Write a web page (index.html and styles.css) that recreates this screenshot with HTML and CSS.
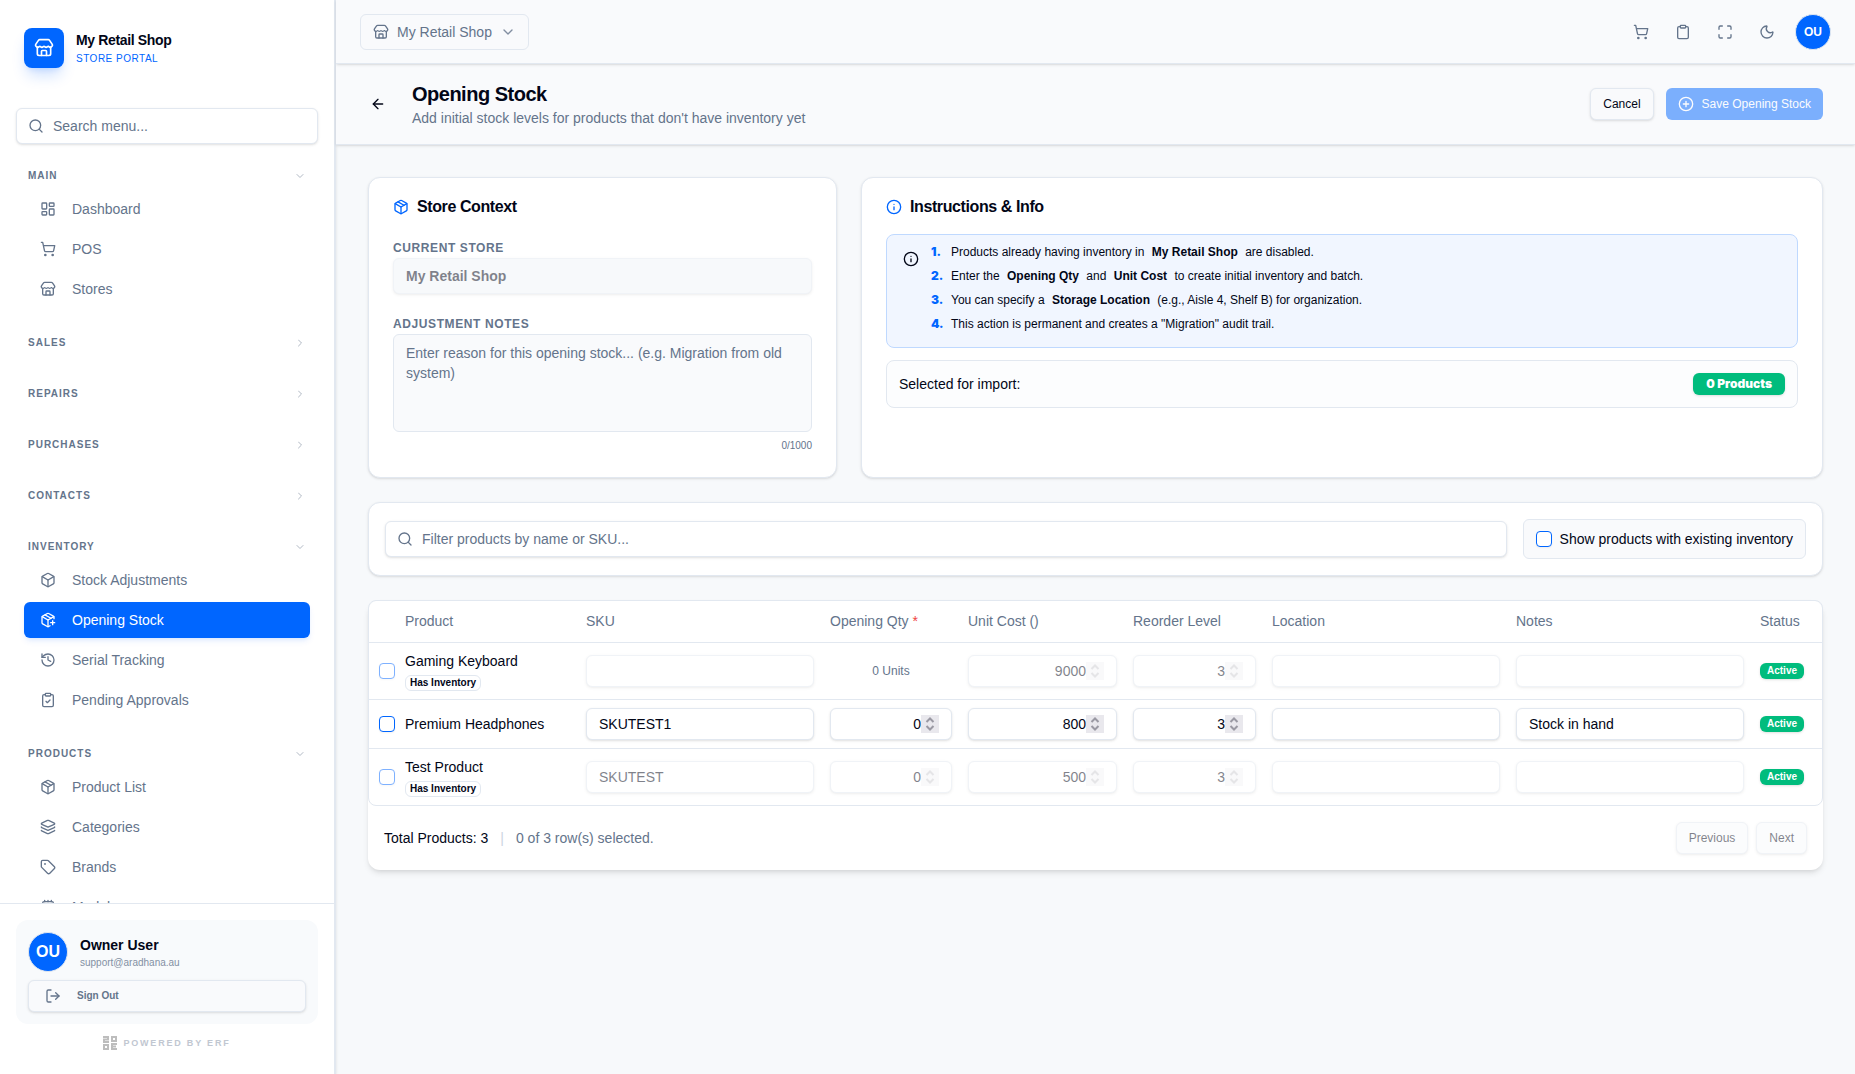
FILE: index.html
```html
<!DOCTYPE html>
<html lang="en">
  <head>
    <meta charset="UTF-8" />
    <meta name="viewport" content="width=device-width, initial-scale=1.0" />
    <title>Opening Stock - My Retail Shop</title>
    <link rel="stylesheet" href="styles.css">
  </head>
  <body>
    <!-- Icon sprite -->
    <svg class="sprite" aria-hidden="true">
      <symbol id="i-store" viewBox="0 0 24 24">
        <path d="M15 21v-5a1 1 0 0 0-1-1h-4a1 1 0 0 0-1 1v5" />
        <path d="M17.774 10.31a1.12 1.12 0 0 0-1.549 0 2.5 2.5 0 0 1-3.451 0 1.12 1.12 0 0 0-1.548 0 2.5 2.5 0 0 1-3.452 0 1.12 1.12 0 0 0-1.549 0 2.5 2.5 0 0 1-3.77-3.248l2.889-4.184A2 2 0 0 1 7 2h10a2 2 0 0 1 1.653.873l2.895 4.192a2.5 2.5 0 0 1-3.774 3.244" />
        <path d="M4 10.95V19a2 2 0 0 0 2 2h12a2 2 0 0 0 2-2v-8.05" />
      </symbol>
      <symbol id="i-search" viewBox="0 0 24 24">
        <circle cx="11" cy="11" r="8" />
        <path d="m21 21-4.34-4.34" />
      </symbol>
      <symbol id="i-down" viewBox="0 0 24 24"><path d="m6 9 6 6 6-6" /></symbol>
      <symbol id="i-right" viewBox="0 0 24 24"><path d="m9 18 6-6-6-6" /></symbol>
      <symbol id="i-dashboard" viewBox="0 0 24 24">
        <rect width="7" height="9" x="3" y="3" rx="1" />
        <rect width="7" height="5" x="14" y="3" rx="1" />
        <rect width="7" height="9" x="14" y="12" rx="1" />
        <rect width="7" height="5" x="3" y="16" rx="1" />
      </symbol>
      <symbol id="i-cart" viewBox="0 0 24 24">
        <circle cx="8" cy="21" r="1" />
        <circle cx="19" cy="21" r="1" />
        <path d="M2.05 2.05h2l2.66 12.42a2 2 0 0 0 2 1.58h9.78a2 2 0 0 0 1.95-1.57l1.65-7.43H5.12" />
      </symbol>
      <symbol id="i-box" viewBox="0 0 24 24">
        <path d="M21 8a2 2 0 0 0-1-1.73l-7-4a2 2 0 0 0-2 0l-7 4A2 2 0 0 0 3 8v8a2 2 0 0 0 1 1.73l7 4a2 2 0 0 0 2 0l7-4A2 2 0 0 0 21 16Z" />
        <path d="m3.3 7 8.7 5 8.7-5" />
        <path d="M12 22V12" />
      </symbol>
      <symbol id="i-package" viewBox="0 0 24 24">
        <path d="M21 8a2 2 0 0 0-1-1.73l-7-4a2 2 0 0 0-2 0l-7 4A2 2 0 0 0 3 8v8a2 2 0 0 0 1 1.73l7 4a2 2 0 0 0 2 0l7-4A2 2 0 0 0 21 16Z" />
        <path d="m3.3 7 8.7 5 8.7-5" />
        <path d="M12 22V12" />
        <path d="m7.5 4.27 9 5.15" />
      </symbol>
      <symbol id="i-package-plus" viewBox="0 0 24 24">
        <path d="M16 16h6" />
        <path d="M19 13v6" />
        <path d="M21 10V8a2 2 0 0 0-1-1.73l-7-4a2 2 0 0 0-2 0l-7 4A2 2 0 0 0 3 8v8a2 2 0 0 0 1 1.73l7 4a2 2 0 0 0 2 0l2-1.14" />
        <path d="m7.5 4.27 9 5.15" />
        <path d="M3.29 7 12 12l8.71-5" />
        <path d="M12 22V12" />
      </symbol>
      <symbol id="i-history" viewBox="0 0 24 24">
        <path d="M3 12a9 9 0 1 0 9-9 9.75 9.75 0 0 0-6.74 2.74L3 8" />
        <path d="M3 3v5h5" />
        <path d="M12 7v5l4 2" />
      </symbol>
      <symbol id="i-clipboard" viewBox="0 0 24 24">
        <rect width="8" height="4" x="8" y="2" rx="1" />
        <path d="M16 4h2a2 2 0 0 1 2 2v14a2 2 0 0 1-2 2H6a2 2 0 0 1-2-2V6a2 2 0 0 1 2-2h2" />
      </symbol>
      <symbol id="i-clipboard-check" viewBox="0 0 24 24">
        <rect width="8" height="4" x="8" y="2" rx="1" />
        <path d="M16 4h2a2 2 0 0 1 2 2v14a2 2 0 0 1-2 2H6a2 2 0 0 1-2-2V6a2 2 0 0 1 2-2h2" />
        <path d="m9 14 2 2 4-4" />
      </symbol>
      <symbol id="i-layers" viewBox="0 0 24 24">
        <path d="M12.83 2.18a2 2 0 0 0-1.66 0L2.6 6.08a1 1 0 0 0 0 1.83l8.58 3.91a2 2 0 0 0 1.66 0l8.58-3.9a1 1 0 0 0 0-1.83z" />
        <path d="M2 12a1 1 0 0 0 .58.91l8.6 3.91a2 2 0 0 0 1.65 0l8.58-3.9A1 1 0 0 0 22 12" />
        <path d="M2 17a1 1 0 0 0 .58.91l8.6 3.91a2 2 0 0 0 1.65 0l8.58-3.9A1 1 0 0 0 22 17" />
      </symbol>
      <symbol id="i-tag" viewBox="0 0 24 24">
        <path d="M12.586 2.586A2 2 0 0 0 11.172 2H4a2 2 0 0 0-2 2v7.172a2 2 0 0 0 .586 1.414l8.704 8.704a2.426 2.426 0 0 0 3.42 0l6.58-6.58a2.426 2.426 0 0 0 0-3.42z" />
        <circle cx="7.5" cy="7.5" r=".5" />
      </symbol>
      <symbol id="i-cpu" viewBox="0 0 24 24">
        <rect width="16" height="16" x="4" y="4" rx="2" />
        <rect width="6" height="6" x="9" y="9" rx="1" />
        <path d="M12 2v2M17 2v2M7 2v2M12 20v2M17 20v2M7 20v2M2 12h2M2 17h2M2 7h2M20 12h2M20 17h2M20 7h2" />
      </symbol>
      <symbol id="i-logout" viewBox="0 0 24 24">
        <path d="m16 17 5-5-5-5" />
        <path d="M21 12H9" />
        <path d="M9 21H5a2 2 0 0 1-2-2V5a2 2 0 0 1 2-2h4" />
      </symbol>
      <symbol id="i-expand" viewBox="0 0 24 24">
        <path d="M8 3H5a2 2 0 0 0-2 2v3" />
        <path d="M21 8V5a2 2 0 0 0-2-2h-3" />
        <path d="M3 16v3a2 2 0 0 0 2 2h3" />
        <path d="M16 21h3a2 2 0 0 0 2-2v-3" />
      </symbol>
      <symbol id="i-moon" viewBox="0 0 24 24">
        <path d="M20.985 12.486a9 9 0 1 1-9.473-9.472c.405-.022.617.46.402.803a6 6 0 0 0 8.268 8.268c.344-.215.825-.004.803.401" />
      </symbol>
      <symbol id="i-back" viewBox="0 0 24 24">
        <path d="m12 19-7-7 7-7" />
        <path d="M19 12H5" />
      </symbol>
      <symbol id="i-plus-circle" viewBox="0 0 24 24">
        <circle cx="12" cy="12" r="10" />
        <path d="M8 12h8M12 8v8" />
      </symbol>
      <symbol id="i-info" viewBox="0 0 24 24">
        <circle cx="12" cy="12" r="10" />
        <path d="M12 16v-4M12 8h.01" />
      </symbol>
      <symbol id="i-spin" viewBox="0 0 18 18">
        <rect class="spin-bg" width="18" height="18" />
        <path class="spin-arrow" d="m5.5 7 3.5-3.5L12.500 7M5.500 11l3.500 3.500L12.500 11" />
      </symbol>
    </svg>

    <div class="app">
      <aside class="sidebar">
        <div class="brand">
          <div class="brand-logo"><svg class="icon icon-lg"><use href="#i-store" /></svg></div>
          <div>
            <div class="brand-name">My Retail Shop</div>
            <div class="brand-sub">STORE PORTAL</div>
          </div>
        </div>

        <div class="search menu-search">
          <svg class="icon"><use href="#i-search" /></svg>
          <input class="input" type="search" placeholder="Search menu..." aria-label="Search menu" />
        </div>

        <nav class="menu">
          <section class="menu-group">
            <button class="menu-label" type="button">MAIN <svg class="icon icon-sm"><use href="#i-down" /></svg></button>
            <a class="menu-item" href="#"><svg class="icon"><use href="#i-dashboard" /></svg>Dashboard</a>
            <a class="menu-item" href="#"><svg class="icon"><use href="#i-cart" /></svg>POS</a>
            <a class="menu-item" href="#"><svg class="icon"><use href="#i-store" /></svg>Stores</a>
          </section>
          <section class="menu-group">
            <button class="menu-label" type="button">SALES <svg class="icon icon-sm"><use href="#i-right" /></svg></button>
          </section>
          <section class="menu-group">
            <button class="menu-label" type="button">REPAIRS <svg class="icon icon-sm"><use href="#i-right" /></svg></button>
          </section>
          <section class="menu-group">
            <button class="menu-label" type="button">PURCHASES <svg class="icon icon-sm"><use href="#i-right" /></svg></button>
          </section>
          <section class="menu-group">
            <button class="menu-label" type="button">CONTACTS <svg class="icon icon-sm"><use href="#i-right" /></svg></button>
          </section>
          <section class="menu-group">
            <button class="menu-label" type="button">INVENTORY <svg class="icon icon-sm"><use href="#i-down" /></svg></button>
            <a class="menu-item" href="#"><svg class="icon"><use href="#i-box" /></svg>Stock Adjustments</a>
            <a class="menu-item active" href="#"><svg class="icon"><use href="#i-package-plus" /></svg>Opening Stock</a>
            <a class="menu-item" href="#"><svg class="icon"><use href="#i-history" /></svg>Serial Tracking</a>
            <a class="menu-item" href="#"><svg class="icon"><use href="#i-clipboard-check" /></svg>Pending Approvals</a>
          </section>
          <section class="menu-group">
            <button class="menu-label" type="button">PRODUCTS <svg class="icon icon-sm"><use href="#i-down" /></svg></button>
            <a class="menu-item" href="#"><svg class="icon"><use href="#i-package" /></svg>Product List</a>
            <a class="menu-item" href="#"><svg class="icon"><use href="#i-layers" /></svg>Categories</a>
            <a class="menu-item" href="#"><svg class="icon"><use href="#i-tag" /></svg>Brands</a>
            <a class="menu-item" href="#"><svg class="icon"><use href="#i-cpu" /></svg>Models</a>
          </section>
        </nav>

        <div class="sidebar-footer">
          <div class="user-card">
            <div class="user-row">
              <div class="avatar avatar-lg">OU</div>
              <div>
                <div class="user-name">Owner User</div>
                <div class="user-mail">support@aradhana.au</div>
              </div>
            </div>
            <button class="btn signout" type="button"><svg class="icon"><use href="#i-logout" /></svg>Sign Out</button>
          </div>
          <div class="powered">
            <svg class="powered-logo" viewBox="0 0 14 14">
              <path d="M0 1h5v2.500H1V6h5M9 1h4v4H9zM1 9h4v4H1zM14 8H9v5h5M9 10.500h4" />
            </svg>
            POWERED BY ERF
          </div>
        </div>
      </aside>

      <div class="main">
        <header class="topbar">
          <label class="store-switch">
            <svg class="icon"><use href="#i-store" /></svg>
            <select aria-label="Store">
              <option>My Retail Shop</option>
            </select>
            <svg class="icon chevron"><use href="#i-down" /></svg>
          </label>
          <div class="topbar-actions">
            <button class="icon-btn" type="button" aria-label="Point of sale"><svg class="icon"><use href="#i-cart" /></svg></button>
            <button class="icon-btn" type="button" aria-label="Clipboard"><svg class="icon"><use href="#i-clipboard" /></svg></button>
            <button class="icon-btn" type="button" aria-label="Full screen"><svg class="icon"><use href="#i-expand" /></svg></button>
            <button class="icon-btn" type="button" aria-label="Dark mode"><svg class="icon"><use href="#i-moon" /></svg></button>
            <button class="avatar" type="button" aria-label="Account">OU</button>
          </div>
        </header>

        <div class="page-head">
          <button class="icon-btn back" type="button" aria-label="Back"><svg class="icon"><use href="#i-back" /></svg></button>
          <div class="page-title">
            <h1>Opening Stock</h1>
            <p>Add initial stock levels for products that don't have inventory yet</p>
          </div>
          <button class="btn" type="button">Cancel</button>
          <button class="btn btn-primary" type="button" disabled><svg class="icon"><use href="#i-plus-circle" /></svg>Save Opening Stock</button>
        </div>

        <main class="content">
          <div class="top-cards">
            <section class="card context-card">
              <h2 class="card-title"><svg class="icon"><use href="#i-package" /></svg>Store Context</h2>
              <label class="field-label" for="store">CURRENT STORE</label>
              <input class="input store-input" id="store" type="text" value="My Retail Shop" disabled />
              <label class="field-label" for="notes">ADJUSTMENT NOTES</label>
              <textarea class="notes" id="notes" maxlength="1000" placeholder="Enter reason for this opening stock... (e.g. Migration from old system)"></textarea>
              <div class="counter">0/1000</div>
            </section>

            <section class="card info-card">
              <h2 class="card-title"><svg class="icon"><use href="#i-info" /></svg>Instructions &amp; Info</h2>
              <div class="alert">
                <svg class="icon"><use href="#i-info" /></svg>
                <ol>
                  <li>Products already having inventory in <b>My Retail Shop</b> are disabled.</li>
                  <li>Enter the <b>Opening Qty</b> and <b>Unit Cost</b> to create initial inventory and batch.</li>
                  <li>You can specify a <b>Storage Location</b> (e.g., Aisle 4, Shelf B) for organization.</li>
                  <li>This action is permanent and creates a "Migration" audit trail.</li>
                </ol>
              </div>
              <div class="selected">
                <span>Selected for import:</span>
                <span class="count-badge">0 Products</span>
              </div>
            </section>
          </div>

          <section class="card filter-card">
            <div class="search">
              <svg class="icon"><use href="#i-search" /></svg>
              <input class="input" type="search" placeholder="Filter products by name or SKU..." aria-label="Filter products" />
            </div>
            <label class="toggle"><input class="check" type="checkbox" />Show products with existing inventory</label>
          </section>

          <section class="table-card">
            <div class="table-wrap">
              <table>
                <colgroup>
                  <col class="c-check" />
                  <col class="c-product" />
                  <col class="c-wide" />
                  <col class="c-qty" />
                  <col class="c-cost" />
                  <col class="c-reorder" />
                  <col class="c-wide" />
                  <col class="c-wide" />
                  <col class="c-status" />
                </colgroup>
                <thead>
                  <tr>
                    <th></th>
                    <th>Product</th>
                    <th>SKU</th>
                    <th>Opening Qty <span class="required">*</span></th>
                    <th>Unit Cost ()</th>
                    <th>Reorder Level</th>
                    <th>Location</th>
                    <th>Notes</th>
                    <th>Status</th>
                  </tr>
                </thead>
                <tbody>
                  <tr>
                    <td class="cell-check"><input class="check" type="checkbox" aria-label="Select Gaming Keyboard" disabled /></td>
                    <td><div class="name">Gaming Keyboard</div><div class="tag">Has Inventory</div></td>
                    <td><input class="input" type="text" aria-label="SKU" disabled /></td>
                    <td class="units">0 Units</td>
                    <td><div class="num"><input class="input" type="number" value="9000" aria-label="Unit cost" disabled /><svg><use href="#i-spin" /></svg></div></td>
                    <td><div class="num"><input class="input" type="number" value="3" aria-label="Reorder level" disabled /><svg><use href="#i-spin" /></svg></div></td>
                    <td><input class="input" type="text" aria-label="Location" disabled /></td>
                    <td><input class="input" type="text" aria-label="Notes" disabled /></td>
                    <td><div class="status">Active</div></td>
                  </tr>
                  <tr>
                    <td class="cell-check"><input class="check" type="checkbox" aria-label="Select Premium Headphones" /></td>
                    <td><div class="name">Premium Headphones</div></td>
                    <td><input class="input" type="text" value="SKUTEST1" aria-label="SKU" /></td>
                    <td><div class="num"><input class="input" type="number" value="0" aria-label="Opening quantity" /><svg><use href="#i-spin" /></svg></div></td>
                    <td><div class="num"><input class="input" type="number" value="800" aria-label="Unit cost" /><svg><use href="#i-spin" /></svg></div></td>
                    <td><div class="num"><input class="input" type="number" value="3" aria-label="Reorder level" /><svg><use href="#i-spin" /></svg></div></td>
                    <td><input class="input" type="text" aria-label="Location" /></td>
                    <td><input class="input" type="text" value="Stock in hand" aria-label="Notes" /></td>
                    <td><div class="status">Active</div></td>
                  </tr>
                  <tr>
                    <td class="cell-check"><input class="check" type="checkbox" aria-label="Select Test Product" disabled /></td>
                    <td><div class="name">Test Product</div><div class="tag">Has Inventory</div></td>
                    <td><input class="input" type="text" value="SKUTEST" aria-label="SKU" disabled /></td>
                    <td><div class="num"><input class="input" type="number" value="0" aria-label="Opening quantity" disabled /><svg><use href="#i-spin" /></svg></div></td>
                    <td><div class="num"><input class="input" type="number" value="500" aria-label="Unit cost" disabled /><svg><use href="#i-spin" /></svg></div></td>
                    <td><div class="num"><input class="input" type="number" value="3" aria-label="Reorder level" disabled /><svg><use href="#i-spin" /></svg></div></td>
                    <td><input class="input" type="text" aria-label="Location" disabled /></td>
                    <td><input class="input" type="text" aria-label="Notes" disabled /></td>
                    <td><div class="status">Active</div></td>
                  </tr>
                </tbody>
              </table>
            </div>
            <div class="table-footer">
              <span>Total Products: 3</span>
              <span class="divider">|</span>
              <span class="muted">0 of 3 row(s) selected.</span>
              <div class="pager">
                <button class="btn" type="button" disabled>Previous</button>
                <button class="btn" type="button" disabled>Next</button>
              </div>
            </div>
          </section>
        </main>
      </div>
    </div>
  </body>
</html>
```
FILE: styles.css
```css
:root {
  --text: #020617;
  --muted: #64748b;
  --border: #e2e8f0;
  --primary: #0066ff;
  --green: #00bc7d;
  --surface: #f9fafc;
  --shadow: 0 1px 3px rgba(0, 0, 0, 0.1), 0 1px 2px -1px rgba(0, 0, 0, 0.1);
}
* {
  box-sizing: border-box;
}
body {
  margin: 0;
  font-family: "Liberation Sans", Arial, sans-serif;
  font-size: 14px;
  line-height: 20px;
  color: var(--text);
  background: #f7f9fb;
}
button,
input,
select,
textarea {
  font: inherit;
  color: inherit;
}
h1,
h2,
p,
ol {
  margin: 0;
  padding: 0;
}
.sprite {
  display: none;
}
.icon {
  width: 16px;
  height: 16px;
  flex-shrink: 0;
  fill: none;
  stroke: currentColor;
  stroke-width: 2;
  stroke-linecap: round;
  stroke-linejoin: round;
}
.icon-sm {
  width: 12px;
  height: 12px;
}
.icon-lg {
  width: 20px;
  height: 20px;
}
.app {
  display: flex;
  height: 100vh;
}

/* Sidebar */
.sidebar {
  display: flex;
  flex-direction: column;
  flex-shrink: 0;
  width: 336px;
  background: #fff;
  border-right: 2px solid var(--border);
  box-shadow: var(--shadow);
}
.brand {
  display: flex;
  align-items: center;
  gap: 12px;
  padding: 28px 24px 40px;
}
.brand-logo {
  display: flex;
  align-items: center;
  justify-content: center;
  width: 40px;
  height: 40px;
  border-radius: 8px;
  color: #fff;
  background: var(--primary);
  box-shadow: 0 10px 15px -3px rgba(0, 102, 255, 0.2), 0 4px 6px -4px rgba(0, 102, 255, 0.2);
}
.brand-name {
  font-weight: bold;
  letter-spacing: -0.025em;
}
.brand-sub {
  font-size: 10px;
  line-height: 17px;
  letter-spacing: 0.05em;
  color: var(--primary);
}
.search {
  display: flex;
  align-items: center;
  flex: 1;
  position: relative;
}
.search .icon {
  position: absolute;
  left: 12px;
  color: var(--muted);
}
.search .input {
  height: 36px;
  padding-left: 36px;
}
.menu-search {
  flex: none;
  margin: 0 16px;
}
.menu {
  flex: 1;
  min-height: 0;
  overflow: hidden;
  margin-top: 16px;
  padding: 0 16px;
}
.menu-group {
  display: flex;
  flex-direction: column;
  margin-bottom: 20px;
}
.menu-label {
  display: flex;
  align-items: center;
  justify-content: space-between;
  height: 31px;
  padding: 0 12px;
  border: 0;
  background: none;
  font-size: 10px;
  font-weight: bold;
  letter-spacing: 0.1em;
  color: var(--muted);
}
.menu-label .icon {
  opacity: 0.5;
}
.menu-item {
  display: flex;
  align-items: center;
  gap: 16px;
  height: 36px;
  margin: 0 8px 4px;
  padding: 0 16px;
  border-radius: 6px;
  color: var(--muted);
  text-decoration: none;
}
.menu-item:last-child {
  margin-bottom: 0;
}
.menu-item.active {
  color: #fff;
  background: var(--primary);
  box-shadow: 0 4px 6px -1px rgba(0, 102, 255, 0.1), 0 2px 4px -2px rgba(0, 102, 255, 0.1);
}
.sidebar-footer {
  padding: 16px 16px 24px;
  border-top: 1px solid var(--border);
}
.user-card {
  padding: 12px;
  border-radius: 12px;
  background: #f8fafc;
}
.user-row {
  display: flex;
  align-items: center;
  gap: 12px;
  margin-bottom: 8px;
}
.user-name {
  font-weight: bold;
}
.user-mail {
  font-size: 10px;
  line-height: 15px;
  color: #8390a3;
}
.avatar {
  display: flex;
  align-items: center;
  justify-content: center;
  width: 36px;
  height: 36px;
  margin-left: 4px;
  padding: 0;
  border: 1px solid var(--border);
  border-radius: 50%;
  font-size: 12px;
  font-weight: bold;
  color: #fff;
  background: var(--primary);
}
.avatar-lg {
  width: 40px;
  height: 40px;
  margin: 0;
  font-size: 16px;
}
.powered {
  display: flex;
  align-items: center;
  justify-content: center;
  gap: 6px;
  height: 14px;
  margin-top: 12px;
  font-size: 9px;
  font-weight: bold;
  letter-spacing: 0.2em;
  color: #c1c7d1;
}
.powered-logo {
  width: 14px;
  height: 14px;
  fill: none;
  stroke: #bdbdbd;
  stroke-width: 2;
}

/* Buttons and inputs */
.btn {
  display: flex;
  align-items: center;
  gap: 8px;
  height: 32px;
  padding: 0 12px;
  border: 1px solid var(--border);
  border-radius: 6px;
  background: var(--surface);
  box-shadow: var(--shadow);
  font-size: 12px;
}
.btn:disabled {
  opacity: 0.5;
}
.btn-primary {
  border: 0;
  color: #fff;
  background: var(--primary);
  box-shadow: none;
}
.signout {
  gap: 16px;
  width: 100%;
  padding: 0 16px;
  font-size: 10px;
  font-weight: bold;
  color: var(--muted);
}
.icon-btn {
  display: flex;
  align-items: center;
  justify-content: center;
  width: 36px;
  height: 36px;
  padding: 0;
  border: 0;
  background: none;
  color: var(--muted);
}
.input {
  display: block;
  width: 100%;
  height: 32px;
  padding: 0 12px;
  border: 1px solid var(--border);
  border-radius: 6px;
  background: #fff;
  box-shadow: var(--shadow);
  outline: none;
}
.input:disabled {
  opacity: 0.5;
}
.input::placeholder,
.notes::placeholder {
  color: var(--muted);
}
.check {
  appearance: none;
  display: block;
  width: 16px;
  height: 16px;
  margin: 0;
  border: 1px solid var(--primary);
  border-radius: 4px;
  background: #fff;
  box-shadow: 0 1px 2px rgba(0, 0, 0, 0.05);
}
.check:disabled {
  opacity: 0.5;
}

/* Top bar and page header */
.main {
  flex: 1;
  min-width: 0;
}
.topbar {
  display: flex;
  align-items: center;
  justify-content: space-between;
  height: 64px;
  padding: 0 24px;
  border-bottom: 1px solid var(--border);
  background: var(--surface);
  box-shadow: var(--shadow);
  position: relative;
}
.store-switch {
  display: flex;
  align-items: center;
  gap: 8px;
  height: 36px;
  padding: 0 12px;
  border: 1px solid var(--border);
  border-radius: 6px;
  color: var(--muted);
}
.store-switch select {
  appearance: none;
  padding: 0;
  border: 0;
  background: none;
}
.chevron {
  opacity: 0.8;
}
.topbar-actions {
  display: flex;
  align-items: center;
  gap: 6px;
}
.page-head {
  display: flex;
  align-items: center;
  gap: 12px;
  height: 81px;
  padding: 0 32px 0 24px;
  border-bottom: 1px solid var(--border);
  background: var(--surface);
  box-shadow: var(--shadow);
}
.back {
  color: var(--text);
}
.page-title {
  flex: 1;
  padding-left: 4px;
}
.page-title h1 {
  font-size: 20px;
  line-height: 28px;
  letter-spacing: -0.025em;
}
.page-title p {
  color: var(--muted);
}

/* Cards */
.content {
  display: flex;
  flex-direction: column;
  gap: 24px;
  padding: 32px;
}
.top-cards {
  display: grid;
  grid-template-columns: repeat(3, 1fr);
  gap: 24px;
}
.card {
  padding: 20px 24px 24px;
  border: 1px solid var(--border);
  border-radius: 12px;
  background: #fff;
  box-shadow: var(--shadow);
}
.info-card {
  grid-column: span 2;
}
.card-title {
  display: flex;
  align-items: center;
  gap: 8px;
  font-size: 16px;
  line-height: 18px;
  letter-spacing: -0.025em;
}
.card-title .icon {
  color: var(--primary);
}
.context-card .card-title {
  margin-bottom: 22px;
}
.field-label {
  display: block;
  font-size: 12px;
  font-weight: bold;
  letter-spacing: 0.05em;
  color: var(--muted);
}
.store-input {
  height: 36px;
  margin-bottom: 20px;
  font-weight: bold;
  background: #f1f5f9;
}
.notes {
  display: block;
  width: 100%;
  height: 98px;
  padding: 8px 12px;
  border: 1px solid var(--border);
  border-radius: 6px;
  background: var(--surface);
  resize: none;
  outline: none;
}
.counter {
  margin-top: 6px;
  font-size: 10px;
  line-height: 15px;
  text-align: right;
  color: var(--muted);
}
.alert {
  display: flex;
  gap: 12px;
  margin: 18px 0 12px;
  padding: 5px 16px 11px;
  border: 1px solid #bfd9ff;
  border-radius: 8px;
  background: #f1f6ff;
}
.alert .icon {
  margin-top: 11px;
}
.alert ol {
  list-style: none;
  counter-reset: step;
  font-size: 12px;
  line-height: 24px;
}
.alert li {
  counter-increment: step;
}
.alert li::before {
  content: counter(step) ".";
  display: inline-block;
  width: 20px;
  font-family: "Arial Black", Inter, sans-serif;
  font-weight: 900;
  color: var(--primary);
}
.alert b {
  padding: 0 4px;
}
.selected {
  display: flex;
  align-items: center;
  justify-content: space-between;
  height: 48px;
  padding: 0 12px;
  border: 1px solid var(--border);
  border-radius: 8px;
  background: #fcfdfe;
}
.count-badge {
  padding: 3px 13px;
  border-radius: 6px;
  background: var(--green);
  box-shadow: var(--shadow);
  font-family: "Arial Black", Inter, sans-serif;
  font-size: 12px;
  font-weight: 900;
  line-height: 16px;
  color: #fff;
}
.filter-card {
  display: flex;
  align-items: center;
  gap: 16px;
  padding: 16px;
}
.toggle {
  display: flex;
  align-items: center;
  gap: 8px;
  height: 40px;
  padding: 0 12px;
  border: 1px solid var(--border);
  border-radius: 6px;
  background: var(--surface);
}

/* Products table */
.table-card {
  border-radius: 12px;
  background: #fff;
  box-shadow: 0 4px 6px -1px rgba(0, 0, 0, 0.1), 0 2px 4px -2px rgba(0, 0, 0, 0.1);
}
.table-wrap {
  border: 1px solid var(--border);
  border-radius: 8px;
}
table {
  width: 100%;
  table-layout: fixed;
  border-collapse: collapse;
}
.c-check {
  width: 28px;
}
.c-product {
  width: 181px;
}
.c-wide {
  width: 244px;
}
.c-qty {
  width: 138px;
}
.c-cost {
  width: 165px;
}
.c-reorder {
  width: 139px;
}
.c-status {
  width: 70px;
}
th {
  height: 41px;
  padding: 0 8px;
  font-weight: normal;
  text-align: left;
  color: var(--muted);
}
td {
  padding: 8px;
}
tr {
  border-bottom: 1px solid var(--border);
}
tbody tr:last-child {
  border-bottom: 0;
}
.cell-check {
  padding: 0 2px 0 10px;
}
.required {
  color: #ef4444;
}
.tag {
  width: fit-content;
  margin-top: 4px;
  padding: 0 4px;
  border: 1px solid var(--border);
  border-radius: 6px;
  font-size: 10px;
  font-weight: bold;
  line-height: 14px;
}
.units {
  font-size: 12px;
  text-align: center;
  color: var(--muted);
}
.num {
  position: relative;
}
.num .input {
  appearance: textfield;
  padding-right: 30px;
  text-align: right;
}
.num .input::-webkit-inner-spin-button {
  appearance: none;
  margin: 0;
}
.num svg {
  position: absolute;
  top: 7px;
  right: 13px;
  width: 18px;
  height: 18px;
  pointer-events: none;
}
.num .input:disabled + svg {
  opacity: 0.25;
}
.spin-bg {
  fill: #e9e8ed;
}
.spin-arrow {
  fill: none;
  stroke: #9a99a3;
  stroke-width: 2;
}
.status {
  width: fit-content;
  padding: 0 7px;
  border-radius: 6px;
  background: var(--green);
  box-shadow: var(--shadow);
  font-size: 10px;
  font-weight: bold;
  line-height: 16px;
  color: #fff;
}
.table-footer {
  display: flex;
  align-items: center;
  gap: 12px;
  padding: 16px;
}
.divider {
  color: #cbd5e1;
}
.muted {
  color: var(--muted);
}
.pager {
  display: flex;
  gap: 8px;
  margin-left: auto;
}
```
